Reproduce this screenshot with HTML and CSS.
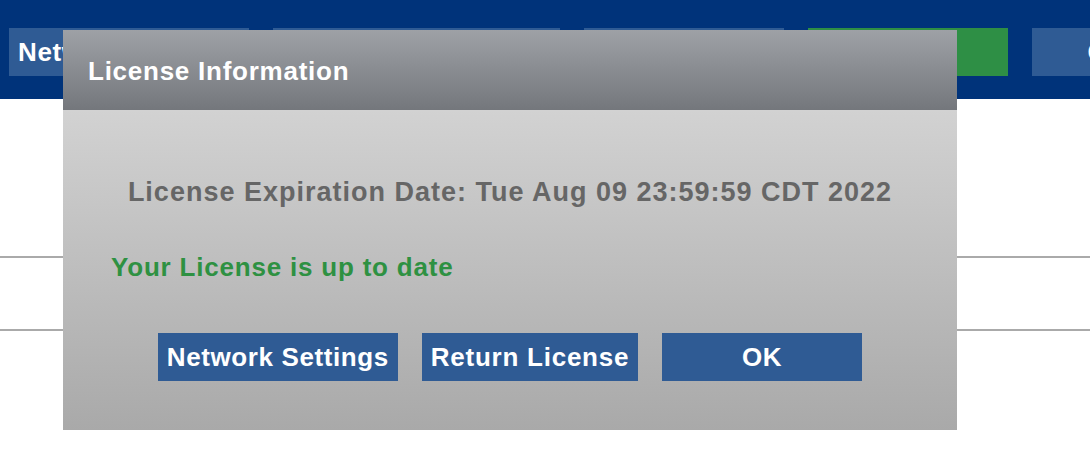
FILE: index.html
```html
<!doctype html>
<html lang="en">
  <head>
    <meta charset="UTF-8" />
    <title>License Information</title>
    <link rel="stylesheet" href="styles.css">
  </head>
  <body>
    <header class="topbar">
      <nav class="nav">
        <button class="nav-btn">Network Settings</button>
        <button class="nav-btn wide"></button>
        <button class="nav-btn"></button>
        <button class="nav-btn green"></button>
        <button class="nav-btn">Cancel</button>
      </nav>
    </header>

    <main class="content">
      <div class="summary"></div>
      <div class="row"></div>
      <div class="row"></div>
    </main>

    <div class="dialog">
      <div class="dialog-header">License Information</div>
      <div class="dialog-body">
        <p class="expires">License Expiration Date: Tue Aug 09 23:59:59 CDT 2022</p>
        <p class="status">Your License is up to date</p>
        <div class="actions">
          <button class="btn">Network Settings</button>
          <button class="btn">Return License</button>
          <button class="btn">OK</button>
        </div>
      </div>
    </div>
  </body>
</html>
```

FILE: styles.css
```css
:root {
  --navy: #00337a;
  --blue: #2f5b94;
  --green: #2e8f45;
}

* {
  box-sizing: border-box;
  font-family: "Liberation Sans", Arial, sans-serif;
}

body {
  margin: 0;
  background: white;
  overflow: hidden;
}

button {
  border: none;
  margin: 0;
  color: white;
  font-size: 26px;
  font-weight: bold;
  letter-spacing: 0.6px;
  height: 48px;
  cursor: pointer;
}

.topbar {
  background-color: var(--navy);
  height: 99px;
  padding: 28px 0 0 9px;
  overflow: hidden;
}

.nav {
  display: flex;
  gap: 24px;
  white-space: nowrap;
}

.nav-btn {
  flex: none;
  min-width: 200px;
  padding: 0 9px;
  background-color: var(--blue);
}

.nav-btn.wide {
  width: 287px;
}

.nav-btn.green {
  background-color: var(--green);
}

.summary {
  height: 157px;
}

.row {
  height: 73px;
  border-top: 2px solid #aaa;
}

/* modal */
.dialog {
  position: absolute;
  left: 63px;
  top: 30px;
  width: 894px;
  height: 400px;
  display: flex;
  flex-direction: column;
}

.dialog-header {
  height: 80px;
  display: flex;
  align-items: center;
  padding: 2px 0 0 25px;
  background: linear-gradient(#9ea1a6, #74777c);
  color: white;
  font-size: 26px;
  font-weight: bold;
  letter-spacing: 0.75px;
}

.dialog-body {
  flex: 1;
  padding-top: 66px;
  background: linear-gradient(#d2d2d2, #a9a9a9);
}

.dialog-body p {
  margin: 0;
  line-height: 32px;
  font-weight: bold;
}

.expires {
  text-align: center;
  color: #666;
  font-size: 27px;
  letter-spacing: 1px;
}

.dialog-body .status {
  margin-top: 43px;
  padding-left: 48px;
  color: #2e9142;
  font-size: 26px;
  letter-spacing: 0.8px;
}

.actions {
  display: flex;
  justify-content: center;
  gap: 24px;
  margin-top: 50px;
}

.btn {
  min-width: 200px;
  padding: 0 9px;
  background-color: var(--blue);
}

.btn:nth-child(2) {
  letter-spacing: 0.75px;
}
```
